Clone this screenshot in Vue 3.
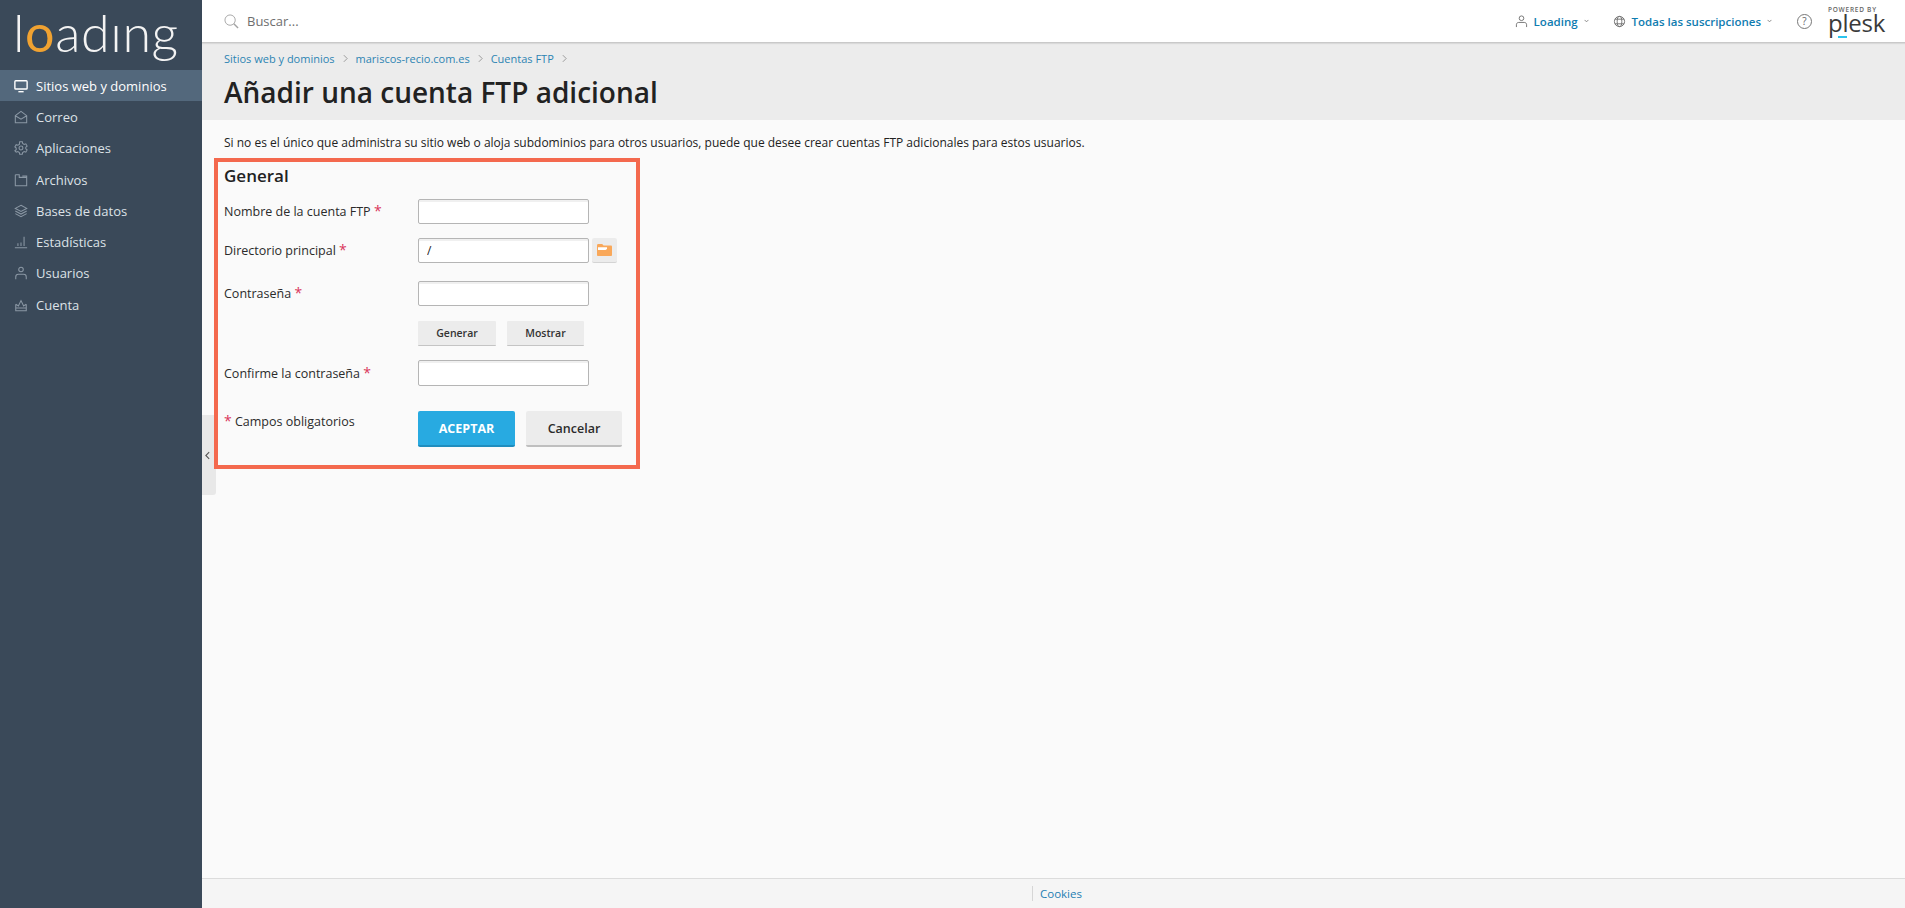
<script setup>
const nav = [
  { label: 'Sitios web y dominios', icon: 'screen', active: true },
  { label: 'Correo', icon: 'mail' },
  { label: 'Aplicaciones', icon: 'gear' },
  { label: 'Archivos', icon: 'folder' },
  { label: 'Bases de datos', icon: 'layers' },
  { label: 'Estadísticas', icon: 'chart' },
  { label: 'Usuarios', icon: 'user' },
  { label: 'Cuenta', icon: 'crown' }
]
const crumbs = ['Sitios web y dominios', 'mariscos-recio.com.es', 'Cuentas FTP']
</script>

<template>
  <div class="page">
    <aside class="side">
      <div class="logo"><span>l</span><span class="logo-o">o</span><span>adıng</span></div>
      <nav class="nav">
        <a v-for="item in nav" :key="item.label" class="nav-item" :class="{ active: item.active }">
          <svg class="nav-icon" viewBox="0 0 16 16" fill="none" stroke="currentColor" stroke-width="1.2">
            <template v-if="item.icon === 'screen'">
              <rect x="1" y="2" width="14" height="9.5" rx="1" stroke-width="1.6" />
              <path d="M5 14.5h6" stroke-width="1.6" />
            </template>
            <template v-else-if="item.icon === 'mail'">
              <path d="M1.5 6.5 8 1.5l6.5 5v8h-13zM1.5 6.5 8 10.5l6.500-4" />
            </template>
            <template v-else-if="item.icon === 'gear'">
              <path d="M6.500 1.500h3l.4 2 1.700 1 1.900-.7 1.500 2.600-1.500 1.300v1.800l1.500 1.300-1.500 2.600-1.900-.7-1.700 1-.4 2h-3l-.4-2-1.700-1-1.900.7L1 11.800l1.500-1.300V8.700L1 7.400l1.500-2.600 1.900.7 1.700-1z" transform="translate(0 -.6)" />
              <circle cx="8" cy="8" r="2.200" />
            </template>
            <template v-else-if="item.icon === 'folder'">
              <path d="M1.500 2v12.500h13V3.500H9.500M1.500 2h4.500v3h8.500" />
            </template>
            <template v-else-if="item.icon === 'layers'">
              <path d="M8 1.500 14.500 5 8 8.500 1.500 5zM1.500 8 8 11.500 14.500 8M1.500 11 8 14.500 14.500 11" />
            </template>
            <template v-else-if="item.icon === 'chart'">
              <path d="M1 14.500h14M4.500 12.500v-3M8 12.500v-4M11.500 12.500V2" />
            </template>
            <template v-else-if="item.icon === 'user'">
              <circle cx="8" cy="4" r="2.600" />
              <path d="M2 15v-2.500c0-2 1.500-3 3-3h6c1.500 0 3 1 3 3V15" />
            </template>
            <template v-else>
              <path d="M2 7v7.500h12V7M2 7l3 2 3-6 3 6 3-2M2 11.500h12" />
            </template>
          </svg>
          <span>{{ item.label }}</span>
        </a>
      </nav>
    </aside>

    <div class="main">
      <header class="top">
        <div class="search">
          <svg class="search-icon" viewBox="0 0 16 16" fill="none" stroke="#a3a3a3" stroke-width="1">
            <circle cx="6.500" cy="6.500" r="5.500" />
            <path d="m10.500 10.500 4.500 4.500" stroke-width="1.500" />
          </svg>
          <span>Buscar...</span>
        </div>
        <div class="top-right">
          <a class="top-link user-link">
            <svg class="top-icon" viewBox="0 0 14 14" fill="none" stroke="#6f6f6f" stroke-width="1">
              <circle cx="7" cy="3.500" r="2.500" />
              <path d="M1.500 13v-2.500c0-1.500 1-2.500 2.500-2.500h6c1.500 0 2.500 1 2.500 2.500V13" />
            </svg>
            <span>Loading</span>
            <svg class="caret" viewBox="0 0 6 4" fill="none" stroke="#777" stroke-width="1"><path d="m.7.7 2.300 2.300L5.300.7" /></svg>
          </a>
          <a class="top-link subs-link">
            <svg class="top-icon" viewBox="0 0 14 14" fill="none" stroke="#6f6f6f" stroke-width="1">
              <circle cx="7" cy="7" r="5.500" />
              <ellipse cx="7" cy="7" rx="2.500" ry="5.500" />
              <path d="M2 4.500h10M2 9.500h10" />
            </svg>
            <span>Todas las suscripciones</span>
            <svg class="caret" viewBox="0 0 6 4" fill="none" stroke="#777" stroke-width="1"><path d="m.7.7 2.300 2.300L5.300.7" /></svg>
          </a>
          <span class="help">?</span>
          <div class="plesk">
            <span class="powered">POWERED BY</span>
            <span class="plesk-name">plesk</span>
            <span class="plesk-bar"></span>
          </div>
        </div>
      </header>

      <section class="head">
        <div class="crumbs">
          <template v-for="c in crumbs" :key="c">
            <a>{{ c }}</a>
            <svg class="crumb-sep" viewBox="0 0 6 10" fill="none" stroke="#8c8c8c" stroke-width="1"><path d="m1 1 4 4-4 4" /></svg>
          </template>
        </div>
        <h1>Añadir una cuenta FTP adicional</h1>
      </section>

      <section class="content">
        <p class="intro">Si no es el único que administra su sitio web o aloja subdominios para otros usuarios, puede que desee crear cuentas FTP adicionales para estos usuarios.</p>
        <form class="box" @submit.prevent>
          <h2>General</h2>
          <div class="row row-1">
            <label>Nombre de la cuenta FTP <i>*</i></label>
            <input type="text" />
          </div>
          <div class="row row-2">
            <label>Directorio principal <i>*</i></label>
            <input type="text" value="/" />
            <button type="button" class="folder-btn">
              <svg viewBox="0 0 15 12" width="15" height="12">
                <path d="M0 1.500C0 .7.500 0 1.200 0h4l1.300 1.500h7.300c.7 0 1.200.5 1.200 1.200V11c0 .6-.5 1-1.200 1H1.200C.5 12 0 11.600 0 11z" fill="#f9a85a" />
                <path d="M1 3.200h9v1.800L8.500 6H1z" fill="#fff" />
              </svg>
            </button>
          </div>
          <div class="row row-3">
            <label>Contraseña <i>*</i></label>
            <input type="password" />
          </div>
          <div class="row row-4">
            <span class="spacer"></span>
            <button type="button" class="small-btn gen">Generar</button>
            <button type="button" class="small-btn show">Mostrar</button>
          </div>
          <div class="row row-5">
            <label>Confirme la contraseña <i>*</i></label>
            <input type="password" />
          </div>
          <div class="row actions">
            <label class="req"><i>*</i> Campos obligatorios</label>
            <button type="button" class="primary">ACEPTAR</button>
            <button type="button" class="cancel">Cancelar</button>
          </div>
        </form>
        <div class="collapse">
          <svg viewBox="0 0 6 10" width="5" height="9" fill="none" stroke="#555" stroke-width="1.300"><path d="M5 1 1 5l4 4" /></svg>
        </div>
      </section>

      <footer class="foot"><a>Cookies</a></footer>
    </div>
  </div>
</template>

<style>
html, body { margin: 0; padding: 0; }
</style>

<style scoped>
.page {
  display: flex;
  width: 1905px;
  height: 908px;
  overflow: hidden;
  font-family: "Open Sans", "Noto Sans", sans-serif;
  font-size: 12px;
  color: #222;
}
a { text-decoration: none; }
.side {
  width: 202px;
  flex: none;
  background: #3a4959;
  color: #dfe4e9;
}
.logo {
  height: 70px;
  box-sizing: border-box;
  padding: 1px 0 0 13px;
  font-family: Lato, "Open Sans", sans-serif;
  font-weight: 300;
  font-size: 52px;
  line-height: 62px;
  letter-spacing: 0.6px;
  color: #f3f3f3;
  white-space: nowrap;
}
.logo-o { color: #f0a231; font-weight: 400; }
.nav { display: flex; flex-direction: column; }
.nav-item {
  display: flex;
  align-items: center;
  gap: 8px;
  height: 31.300px;
  padding-left: 14px;
  font-size: 13px;
  color: #dde2e7;
}
.nav-item.active { background: #53687c; color: #fff; }
.nav-icon { width: 14px; height: 14px; flex: none; color: #8b98a5; }
.active .nav-icon { color: #fff; }
.main {
  flex: 1;
  display: flex;
  flex-direction: column;
  min-width: 0;
}
.top {
  height: 42px;
  flex: none;
  display: flex;
  align-items: center;
  justify-content: space-between;
  padding: 0 25px 0 22px;
  background: #fff;
  border-bottom: 1px solid #c9c9c9;
  box-shadow: 0 1px 1px rgba(0, 0, 0, 0.08);
  position: relative;
}
.search { display: flex; align-items: center; gap: 8px; color: #6e6e6e; font-size: 13px; }
.search-icon { width: 15px; height: 15px; }
.top-right { display: flex; align-items: center; }
.top-link { display: flex; align-items: center; color: #0f7cb0; font-size: 11.500px; font-weight: 600; }
.top-icon { width: 13px; height: 13px; margin-right: 6px; }
.caret { width: 5px; height: 4px; margin-left: 6px; }
.subs-link { margin-left: 24px; }
.help {
  width: 13px;
  height: 13px;
  margin-left: 25px;
  border: 1px solid #777;
  border-radius: 50%;
  color: #666;
  font-size: 10px;
  line-height: 13px;
  text-align: center;
}
.plesk {
  position: relative;
  width: 52px;
  height: 36px;
  margin-left: 16px;
  color: #3a3a3a;
}
.powered {
  position: absolute;
  top: 3px;
  left: 0;
  font-size: 6.500px;
  line-height: 8px;
  font-weight: 600;
  letter-spacing: 0.75px;
  white-space: nowrap;
  color: #666;
}
.plesk-name {
  position: absolute;
  top: 5px;
  left: 0;
  font-family: "Open Sans", sans-serif;
  font-size: 24px;
  line-height: 30px;
  letter-spacing: -0.2px;
}
.plesk-bar {
  position: absolute;
  top: 33px;
  left: 10px;
  width: 9px;
  height: 2px;
  background: #2bc4ee;
}
.head {
  height: 77px;
  flex: none;
  box-sizing: border-box;
  padding: 7px 22px 0;
  background: #ececec;
}
.crumbs { display: flex; align-items: center; height: 17px; color: #2d84b3; font-size: 11px; }
.crumb-sep { width: 5px; height: 9px; margin: 0 8px; }
h1 {
  margin: 6px 0 0;
  font-size: 28px;
  line-height: 38px;
  font-weight: 600;
  color: #222;
}
.content {
  flex: 1;
  position: relative;
  background: #fafafa;
  padding: 14px 12px 0;
}
.intro { margin: 0 0 0 10px; font-size: 12px; line-height: 17px; color: #222; height: 24px; }
.box {
  position: relative;
  z-index: 1;
  width: 426px;
  height: 311px;
  box-sizing: border-box;
  border: 4px solid #f4694e;
  padding: 0 6px;
}
h2 {
  margin: 0;
  height: 26px;
  padding-top: 1px;
  font-size: 17px;
  line-height: 26px;
  font-weight: 600;
  color: #222;
}
.row { display: flex; align-items: center; }
.row label { width: 194px; flex: none; font-size: 12.500px; color: #2b2b2b; }
.row i { color: #d9365a; font-style: normal; font-size: 14px; line-height: 12px; }
.spacer { width: 194px; flex: none; }
input {
  width: 171px;
  height: 25px;
  box-sizing: border-box;
  border: 1px solid #b5b5b5;
  border-radius: 2px;
  background: #fff;
  box-shadow: inset 0 2px 0 #f0f0f0;
  padding: 0 8px;
  font-family: inherit;
  font-size: 12px;
  color: #222;
  outline: none;
}
button { font-family: inherit; border: 0; padding: 0; cursor: pointer; }
.row-1 { margin-top: 10px; }
.row-2 { margin-top: 14px; }
.row-3 { margin-top: 18px; }
.row-4 { margin-top: 15px; }
.row-5 { margin-top: 14px; height: 26px; }
.row-5 input { height: 26px; }
.actions { margin-top: 25px; align-items: flex-start; }
.actions label { padding-top: 2px; }
.folder-btn {
  width: 25px;
  height: 25px;
  margin-left: 3px;
  background: #ececec;
  border-bottom: 1px solid #d4d4d4;
  border-radius: 2px;
  display: flex;
  align-items: center;
  justify-content: center;
}
.small-btn {
  height: 25px;
  background: #ececec;
  border-bottom: 1px solid #c4c4c4;
  border-radius: 1px;
  font-size: 10.500px;
  font-weight: 600;
  color: #333;
}
.gen { width: 78px; }
.show { width: 77px; margin-left: 11px; }
.primary, .cancel {
  width: 97px;
  height: 36px;
  border-radius: 2px;
  font-size: 12.500px;
}
.primary {
  background: #28aae1;
  border-bottom: 2px solid #1f8dbe;
  color: #fff;
  font-weight: 700;
}
.cancel {
  width: 96px;
  margin-left: 11px;
  background: #ececec;
  border-bottom: 2px solid #bfbfbf;
  color: #2b2b2b;
  font-weight: 600;
}
.collapse {
  position: absolute;
  left: 0;
  top: 295px;
  width: 14px;
  height: 80px;
  background: #e8e8e8;
  border-radius: 0 0 3px 0;
  display: flex;
  align-items: center;
  justify-content: flex-start;
  padding-left: 3px;
  box-sizing: border-box;
}
.foot {
  height: 30px;
  flex: none;
  box-sizing: border-box;
  background: #f5f5f5;
  border-top: 1px solid #dcdcdc;
  display: flex;
  align-items: center;
  padding-left: 830px;
  font-size: 11.500px;
}
.foot a {
  border-left: 1px solid #d6d6d6;
  padding-left: 7px;
  color: #1f7fb3;
  line-height: 15px;
}
</style>
